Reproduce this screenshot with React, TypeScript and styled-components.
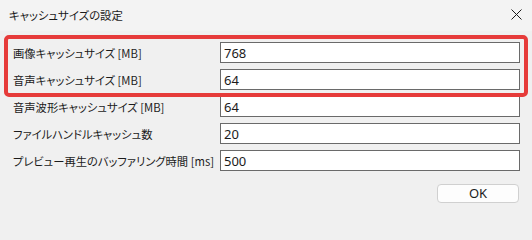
import React from 'react'
import styled, { createGlobalStyle } from 'styled-components'

const GlobalStyle = createGlobalStyle`
  html, body {
    margin: 0;
    padding: 0;
    background: #f0f0f0;
  }
  body {
    font-family: "Noto Sans CJK JP", "Noto Sans", sans-serif;
    font-feature-settings: "palt" 1;
    color: #1b1b1b;
  }
`

const Window = styled.div`
  width: 532px;
  height: 216px;
  background: #f0f0f0;
  display: flex;
  flex-direction: column;
  overflow: hidden;
`

const TitleBar = styled.div`
  height: 31px;
  flex: none;
  background: #f3f3f3;
  display: flex;
  align-items: center;
  justify-content: space-between;
  padding: 0 10px 2px 9px;
  box-sizing: border-box;
`

const Title = styled.span`
  font-size: 11.4px;
  color: #1b1b1b;
`

const CloseButton = styled.button`
  border: none;
  background: none;
  padding: 0;
  width: 12px;
  height: 12px;
  display: flex;
  align-items: center;
  justify-content: center;
  cursor: default;
`

const Body = styled.div`
  position: relative;
  flex: 1;
  display: flex;
  flex-direction: column;
  padding: 11px 12px 0 13px;
`

const Highlight = styled.div`
  position: absolute;
  left: 4px;
  top: 4px;
  width: 524px;
  height: 62px;
  box-sizing: border-box;
  border: 4px solid #e63b3a;
  border-radius: 5px;
  pointer-events: none;
`

const Rows = styled.div`
  display: flex;
  flex-direction: column;
  gap: 6px;
`

const Row = styled.div`
  display: flex;
  align-items: center;
  height: 21px;
`

const Label = styled.label`
  width: 207px;
  flex: none;
  font-size: 11.3px;
  white-space: nowrap;
`

const Field = styled.input`
  width: 300px;
  height: 21px;
  box-sizing: border-box;
  border: 1px solid #6a6a6a;
  background: #fff;
  padding: 0 3px;
  font-family: "Noto Sans", sans-serif;
  font-size: 13px;
  color: #1b1b1b;
  outline: none;
`

const Footer = styled.div`
  display: flex;
  justify-content: flex-end;
  padding: 13px 1px 0 0;
`

const OkButton = styled.button`
  width: 82px;
  height: 19px;
  box-sizing: border-box;
  border: 1px solid #d0d0d0;
  border-radius: 4px;
  background: #fdfdfd;
  font-family: "Noto Sans", sans-serif;
  font-size: 13px;
  color: #1b1b1b;
  padding: 0;
  line-height: 17px;
`

const settings = [
  { label: '画像キャッシュサイズ [MB]', value: '768' },
  { label: '音声キャッシュサイズ [MB]', value: '64' },
  { label: '音声波形キャッシュサイズ [MB]', value: '64' },
  { label: 'ファイルハンドルキャッシュ数', value: '20' },
  { label: 'プレビュー再生のバッファリング時間 [ms]', value: '500' },
]

export default function App() {
  return (
    <Window lang="ja">
      <GlobalStyle />
      <TitleBar>
        <Title>キャッシュサイズの設定</Title>
        <CloseButton aria-label="閉じる">
          <svg width="11" height="11" viewBox="0 0 11 11">
            <path d="M0.5 0.5 L10.5 10.5 M10.5 0.5 L0.5 10.5" stroke="#1b1b1b" strokeWidth="1" />
          </svg>
        </CloseButton>
      </TitleBar>
      <Body>
        <Rows>
          {settings.map((s) => (
            <Row key={s.label}>
              <Label>{s.label}</Label>
              <Field defaultValue={s.value} />
            </Row>
          ))}
        </Rows>
        <Footer>
          <OkButton>OK</OkButton>
        </Footer>
        <Highlight />
      </Body>
    </Window>
  )
}
